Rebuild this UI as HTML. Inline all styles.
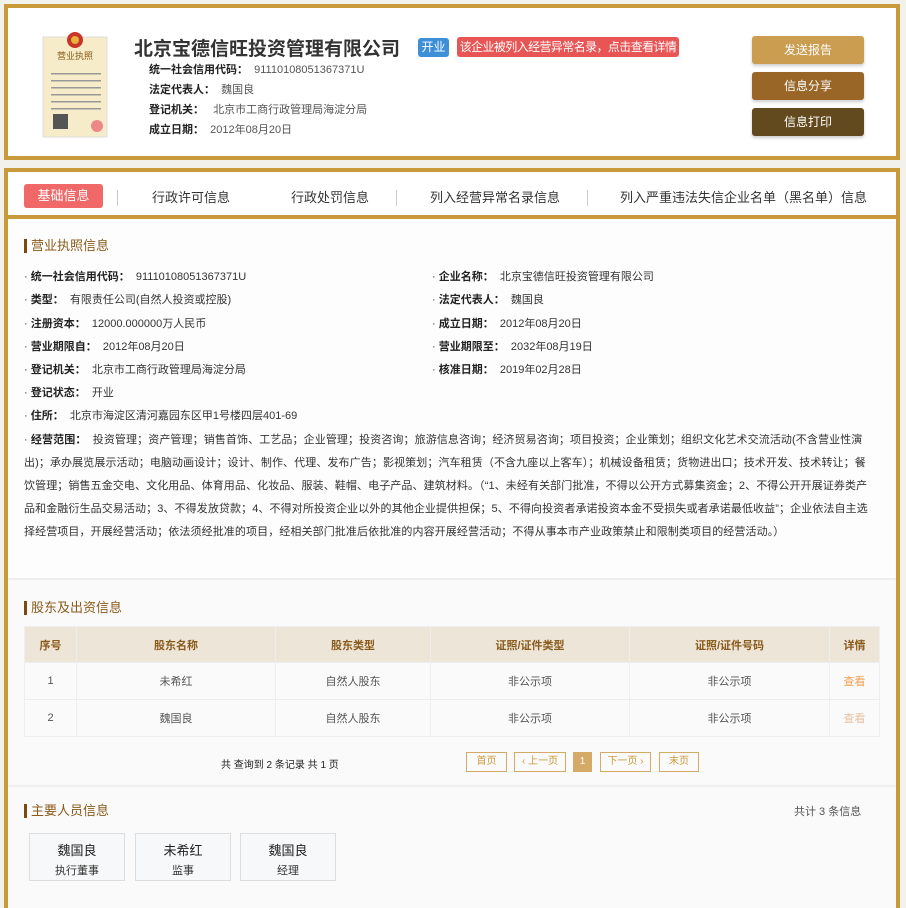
<!DOCTYPE html>
<html><head><meta charset="utf-8"><style>
*{margin:0;padding:0;box-sizing:border-box}
body{width:906px;height:894px;background:#f3f1ec;font-family:"Liberation Sans","Noto Sans CJK SC",sans-serif;color:#333;position:relative;overflow:hidden;font-size:12px}
.abs{position:absolute}
.top{left:4px;top:4px;width:896px;height:156px;border:4px solid #c99a39;background:#fff}
.lbl{font-weight:bold;color:#222}
.btn{position:absolute;left:752px;width:112px;height:28px;border-radius:3px;color:#fff;font-size:12px;text-align:center;line-height:28px;box-shadow:0 2px 3px rgba(0,0,0,.2)}
.main{left:4px;top:168px;width:896px;height:740px;border:4px solid #c99a39;border-bottom:none;background:#fdfdfd}
.tabs{left:0;top:0;width:888px;height:47px;border-bottom:4px solid #c99a39;background:#fff}
.tab{position:absolute;top:15px;font-size:13px;color:#333}
.sep{position:absolute;top:18px;width:1px;height:16px;background:#ccc}
.h{position:absolute;left:16px;font-size:13px;color:#8a5a1a;border-left:3px solid #7a4a10;padding-left:4px;line-height:14px}
.row{position:absolute;font-size:11px;color:#333;white-space:nowrap}
.row b{color:#222}
table{position:absolute;left:16px;top:454px;width:856px;border-collapse:collapse;font-size:11px}
td,th{border:1px solid #eee;text-align:center;height:37px}
th{background:#ece5d8;color:#8a5a1a;font-weight:bold;height:36px}
td{color:#555;background:#fafafa}
.pg{position:absolute;top:580px;height:20px;border:1px solid #d4aa66;color:#c99a39;font-size:10px;line-height:18px;text-align:center}
.card{position:absolute;top:661px;width:96px;height:48px;border:1px solid #ddd;background:#f6f8f9;text-align:center}
</style></head><body>
<div class="abs top">
 <svg class="abs" style="left:33px;top:20px" width="68" height="112" viewBox="0 0 68 112">
  <rect x="2" y="9" width="64" height="100" fill="#f6ecc9" stroke="#ddd"/>
  <circle cx="34" cy="12" r="8" fill="#c8362a"/><circle cx="34" cy="12" r="4" fill="#e5b23a"/>
  <text x="34" y="31" font-size="9" text-anchor="middle" fill="#8a5a1a" font-family="Noto Sans CJK SC">营业执照</text>
  <g fill="#999"><rect x="10" y="45" width="50" height="1.5"/><rect x="10" y="52" width="50" height="1.5"/><rect x="10" y="59" width="50" height="1.5"/><rect x="10" y="66" width="50" height="1.5"/><rect x="10" y="73" width="50" height="1.5"/><rect x="10" y="80" width="50" height="1.5"/></g>
  <rect x="12" y="86" width="15" height="15" fill="#555"/>
  <circle cx="56" cy="98" r="6" fill="#e88"/>
 </svg>
 <div class="abs" style="left:126px;top:26px;font-size:19px;font-weight:bold;color:#333">北京宝德信旺投资管理有限公司</div>
 <div class="abs" style="left:410px;top:30px;width:31px;height:19px;background:#3e8fd8;color:#fff;border-radius:3px;font-size:12px;text-align:center;line-height:19px">开业</div>
 <div class="abs" style="left:449px;top:29px;width:222px;height:20px;background:#e85555;color:#fff;border-radius:3px;font-size:12px;letter-spacing:-0.6px;text-align:center;line-height:20px;white-space:nowrap;overflow:hidden">该企业被列入经营异常名录，点击查看详情</div>
 <div class="abs" style="left:141px;top:52px;line-height:20px;font-size:11px">
  <div><span class="lbl">统一社会信用代码：</span> <span style="color:#555">&nbsp;91110108051367371U</span></div>
  <div><span class="lbl">法定代表人：</span> <span style="color:#555">&nbsp;魏国良</span></div>
  <div><span class="lbl">登记机关：</span> <span style="color:#555">&nbsp;&nbsp;北京市工商行政管理局海淀分局</span></div>
  <div><span class="lbl">成立日期：</span> <span style="color:#555">&nbsp;2012年08月20日</span></div>
 </div>
</div>
<div class="btn" style="top:36px;background:#cb9d50">发送报告</div>
<div class="btn" style="top:72px;background:#9a6628">信息分享</div>
<div class="btn" style="top:108px;background:#624a1e">信息打印</div>

<div class="abs main">
 <div class="abs tabs">
  <div class="abs" style="left:16px;top:12px;width:79px;height:24px;background:#f06868;border-radius:3px;color:#fff;font-size:13px;text-align:center;line-height:24px">基础信息</div>
  <div class="sep" style="left:109px"></div>
  <div class="tab" style="left:144px">行政许可信息</div>
  <div class="tab" style="left:283px">行政处罚信息</div>
  <div class="sep" style="left:388px"></div>
  <div class="tab" style="left:422px">列入经营异常名录信息</div>
  <div class="sep" style="left:579px"></div>
  <div class="tab" style="left:612px">列入严重违法失信企业名单（黑名单）信息</div>
 </div>
 <div class="h" style="top:67px">营业执照信息</div>
 <div class="row" style="left:16px;top:96px">· <b>统一社会信用代码：</b> &nbsp;91110108051367371U</div>
 <div class="row" style="left:424px;top:96px">· <b>企业名称：</b> &nbsp;北京宝德信旺投资管理有限公司</div>
 <div class="row" style="left:16px;top:119px">· <b>类型：</b> &nbsp;有限责任公司(自然人投资或控股)</div>
 <div class="row" style="left:424px;top:119px">· <b>法定代表人：</b> &nbsp;魏国良</div>
 <div class="row" style="left:16px;top:143px">· <b>注册资本：</b> &nbsp;12000.000000万人民币</div>
 <div class="row" style="left:424px;top:143px">· <b>成立日期：</b> &nbsp;2012年08月20日</div>
 <div class="row" style="left:16px;top:166px">· <b>营业期限自：</b> &nbsp;2012年08月20日</div>
 <div class="row" style="left:424px;top:166px">· <b>营业期限至：</b> &nbsp;2032年08月19日</div>
 <div class="row" style="left:16px;top:189px">· <b>登记机关：</b> &nbsp;北京市工商行政管理局海淀分局</div>
 <div class="row" style="left:424px;top:189px">· <b>核准日期：</b> &nbsp;2019年02月28日</div>
 <div class="row" style="left:16px;top:212px">· <b>登记状态：</b> &nbsp;开业</div>
 <div class="row" style="left:16px;top:235px">· <b>住所：</b> &nbsp;北京市海淀区清河嘉园东区甲1号楼四层401-69</div>
 <div class="abs" style="left:16px;top:257px;width:846px;font-size:11px;letter-spacing:0.1px;line-height:23px;color:#333">· <b style="color:#222">经营范围：</b> &nbsp;投资管理；资产管理；销售首饰、工艺品；企业管理；投资咨询；旅游信息咨询；经济贸易咨询；项目投资；企业策划；组织文化艺术交流活动(不含营业性演出)；承办展览展示活动；电脑动画设计；设计、制作、代理、发布广告；影视策划；汽车租赁（不含九座以上客车）；机械设备租赁；货物进出口；技术开发、技术转让；餐饮管理；销售五金交电、文化用品、体育用品、化妆品、服装、鞋帽、电子产品、建筑材料。（“1、未经有关部门批准，不得以公开方式募集资金；2、不得公开开展证券类产品和金融衍生品交易活动；3、不得发放贷款；4、不得对所投资企业以外的其他企业提供担保；5、不得向投资者承诺投资本金不受损失或者承诺最低收益”；企业依法自主选择经营项目，开展经营活动；依法须经批准的项目，经相关部门批准后依批准的内容开展经营活动；不得从事本市产业政策禁止和限制类项目的经营活动。）</div>
 <div class="abs" style="left:0;top:406px;width:888px;height:330px;background:#fafafa;border-top:2px solid #eee"></div>
 <div class="h" style="top:429px">股东及出资信息</div>
 <table>
  <tr><th style="width:52px">序号</th><th style="width:199px">股东名称</th><th style="width:155px">股东类型</th><th style="width:199px">证照/证件类型</th><th style="width:200px">证照/证件号码</th><th>详情</th></tr>
  <tr><td>1</td><td>未希红</td><td>自然人股东</td><td>非公示项</td><td>非公示项</td><td style="color:#f0a050">查看</td></tr>
  <tr><td>2</td><td>魏国良</td><td>自然人股东</td><td>非公示项</td><td>非公示项</td><td style="color:#e8c0a0">查看</td></tr>
 </table>
 <div class="abs" style="left:213px;top:584px;font-size:10px;color:#222">共 查询到 2 条记录 共 1 页</div>
 <div class="pg" style="left:458px;width:41px">首页</div>
 <div class="pg" style="left:506px;width:52px">‹ 上一页</div>
 <div class="pg" style="left:565px;width:19px;background:#d4aa66;color:#fff">1</div>
 <div class="pg" style="left:592px;width:51px">下一页 ›</div>
 <div class="pg" style="left:651px;width:40px">末页</div>
 <div class="abs" style="left:0;top:613px;width:888px;height:2px;background:#eee"></div>
 <div class="h" style="top:632px">主要人员信息</div>
 <div class="abs" style="left:786px;top:631px;font-size:11px;color:#555">共计 3 条信息</div>
 <div class="card" style="left:21px"><div style="font-size:13px;margin-top:6px;color:#222">魏国良</div><div style="font-size:11px;margin-top:3px;color:#333">执行董事</div></div>
 <div class="card" style="left:127px"><div style="font-size:13px;margin-top:6px;color:#222">未希红</div><div style="font-size:11px;margin-top:3px;color:#333">监事</div></div>
 <div class="card" style="left:232px"><div style="font-size:13px;margin-top:6px;color:#222">魏国良</div><div style="font-size:11px;margin-top:3px;color:#333">经理</div></div>
</div>
</body></html>
